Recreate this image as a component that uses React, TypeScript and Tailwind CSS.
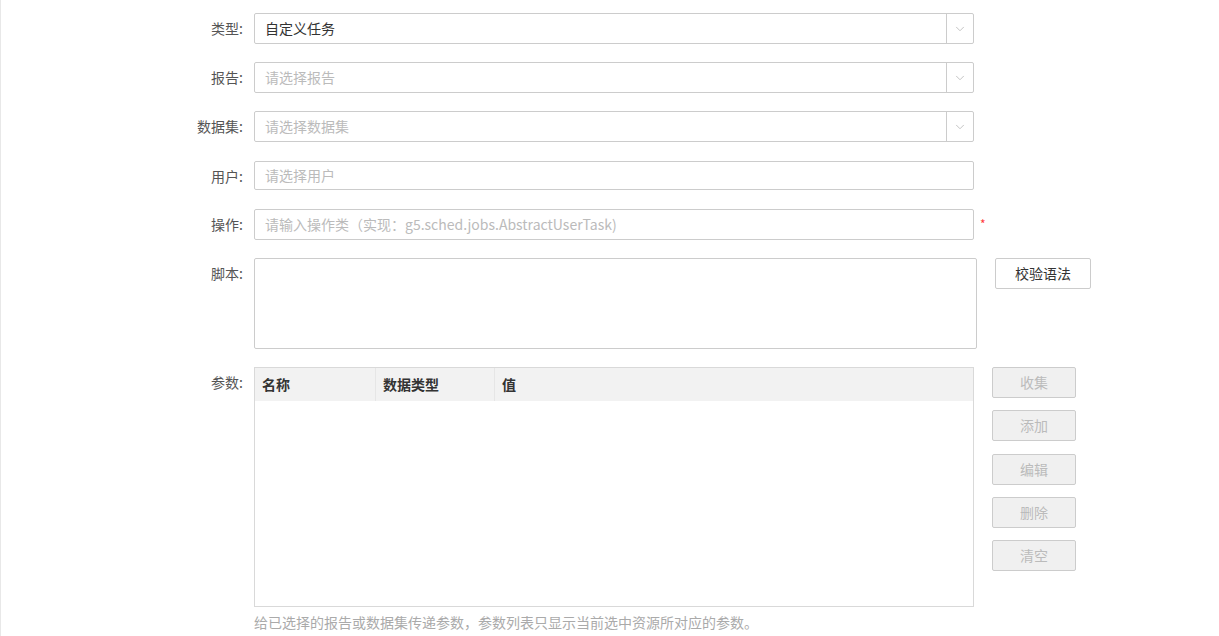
import { ChevronDown } from 'lucide-react';

const font = { fontFamily: '"Noto Sans CJK SC", "Noto Sans", sans-serif' };

function Label({ text }: { text: string }) {
  return (
    <div className="w-[253px] shrink-0 pr-[11px] text-right text-[14px] leading-[30px] text-[#555]">
      {text}
    </div>
  );
}

function Select({ value, placeholder }: { value?: string; placeholder?: string }) {
  return (
    <div className="flex h-[31px] w-[720px] items-stretch rounded-[2px] border border-[#cccccc] bg-white">
      <div className={`flex flex-1 items-center px-[10px] text-[14px] ${value ? 'text-[#333]' : 'text-[#bbbbbb]'}`}>
        {value ?? placeholder}
      </div>
      <div className="flex w-[27px] items-center justify-center border-l border-[#cccccc]">
        <ChevronDown className="h-[14px] w-[14px] text-[#bbbbbb]" strokeWidth={1.5} />
      </div>
    </div>
  );
}

function Input({ placeholder, h = 'h-[29px]' }: { placeholder: string; h?: string }) {
  return (
    <div className={`flex ${h} w-[720px] items-center rounded-[2px] border border-[#cccccc] bg-white px-[10px] text-[14px] text-[#bbbbbb]`}>
      {placeholder}
    </div>
  );
}

const sideButtons = ['收集', '添加', '编辑', '删除', '清空'];

export default function App() {
  return (
    <div className="min-h-[636px] border-l border-[#e8e8e8] bg-white" style={font}>
      <div className="flex flex-col pt-[13px]">
        <div className="flex items-start">
          <Label text="类型:" />
          <Select value="自定义任务" />
        </div>
        <div className="mt-[18px] flex items-start">
          <Label text="报告:" />
          <Select placeholder="请选择报告" />
        </div>
        <div className="mt-[18px] flex items-start">
          <Label text="数据集:" />
          <Select placeholder="请选择数据集" />
        </div>
        <div className="mt-[19px] flex items-start">
          <Label text="用户:" />
          <Input placeholder="请选择用户" />
        </div>
        <div className="mt-[18px] flex items-start">
          <Label text="操作:" />
          <Input placeholder="请输入操作类（实现：g5.sched.jobs.AbstractUserTask)" h="h-[31px]" />
          <span className="ml-[6px] mt-[9px] text-[12px] leading-none text-[#ff3b3b]">*</span>
        </div>
        <div className="mt-[18px] flex items-start">
          <Label text="脚本:" />
          <div className="h-[91px] w-[723px] rounded-[2px] border border-[#cccccc] bg-white" />
          <button className="ml-[18px] h-[31px] w-[96px] rounded-[2px] border border-[#cccccc] bg-white text-[14px] text-[#333]">
            校验语法
          </button>
        </div>
        <div className="mt-[18px] flex items-start">
          <Label text="参数:" />
          <div className="flex flex-col">
            <div className="h-[240px] w-[720px] border border-[#d9d9d9] bg-white">
              <div className="flex h-[33px] bg-[#f2f2f2] text-[14px] font-bold text-[#333]">
                <div className="flex w-[121px] items-center border-r border-[#e6e6e6] px-[7px]">名称</div>
                <div className="flex w-[119px] items-center border-r border-[#e6e6e6] px-[7px]">数据类型</div>
                <div className="flex flex-1 items-center px-[7px]">值</div>
              </div>
            </div>
            <div className="mt-[5px] text-[14px] leading-[20px] text-[#aaaaaa]">
              给已选择的报告或数据集传递参数，参数列表只显示当前选中资源所对应的参数。
            </div>
          </div>
          <div className="ml-[18px] flex flex-col gap-[12.25px]">
            {sideButtons.map((b) => (
              <button
                key={b}
                className="h-[31px] w-[84px] rounded-[2px] border border-[#cccccc] bg-[#f0f0f0] text-[14px] text-[#bbbbbb]"
              >
                {b}
              </button>
            ))}
          </div>
        </div>
      </div>
    </div>
  );
}
